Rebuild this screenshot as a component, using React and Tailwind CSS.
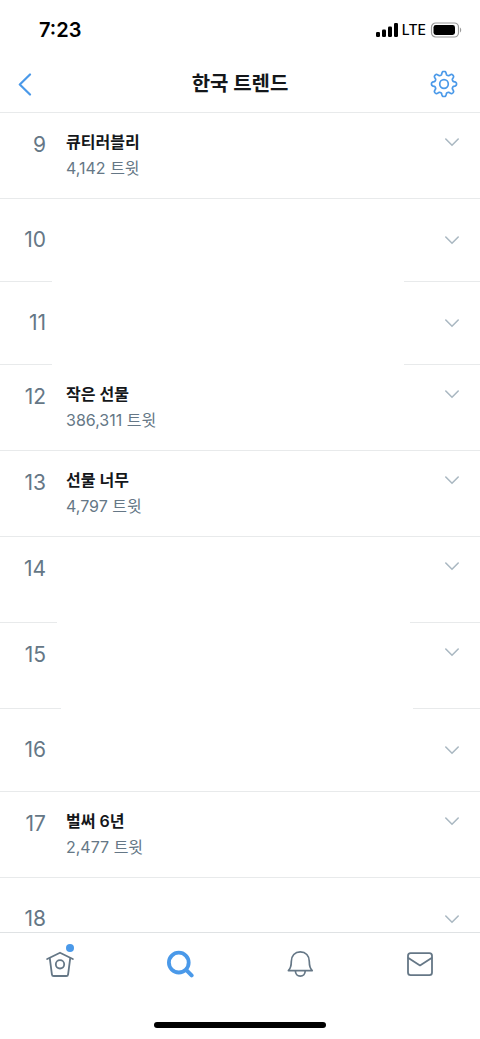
import React, { useState } from 'react';

const trends = [
    { rank: 9, title: '큐티러블리', count: '4,142' },
    { rank: 10, size: 'short', divider: 'narrow' },
    { rank: 11, size: 'short', divider: 'narrow' },
    { rank: 12, title: '작은 선물', count: '386,311' },
    { rank: 13, title: '선물 너무', count: '4,797' },
    { rank: 14, divider: 'medium' },
    { rank: 15, divider: 'wide' },
    { rank: 16, size: 'short' },
    { rank: 17, title: '벌써 6년', count: '2,477' },
    { rank: 18, size: 'short' },
];

// left and right pieces of a broken divider line
const dividers = {
    narrow: ['w-[52px]', 'w-[76px]'],
    medium: ['w-[57px]', 'w-[70px]'],
    wide: ['w-[61px]', 'w-[67px]'],
};

// outline of the settings gear, 8 teeth round a 28x28 box
const gearPoints = Array.from({ length: 160 }, (_, i) => {
    const a = (i / 160) * Math.PI * 2;
    const r = 10.9 + 1.7 * Math.tanh(1.8 * Math.cos(8 * a));
    return `${(14 + r * Math.cos(a)).toFixed(2)},${(14 + r * Math.sin(a)).toFixed(2)}`;
}).join(' ');

const GearIcon = () => (
    <svg width="28" height="28" viewBox="0 0 28 28" fill="none" stroke="currentColor" strokeWidth="1.7" strokeLinejoin="round">
        <polygon points={gearPoints} />
        <circle cx="14" cy="14" r="4.3" />
    </svg>
);

const HomeIcon = () => (
    <svg width="28" height="28" viewBox="0 0 28 28" fill="none" stroke="currentColor" strokeWidth="1.8" strokeLinecap="round" strokeLinejoin="round">
        <path d="M1.2 9 14 2.7 26.800 9" />
        <path d="M3.8 8.400l2.100 15.900c.1 1 .8 1.700 1.800 1.700h12.600c1 0 1.700-.7 1.800-1.700L24.200 8.400" />
        <circle cx="14" cy="14.3" r="4.2" />
    </svg>
);

const SearchIcon = () => (
    <svg width="28" height="28" viewBox="0 0 28 28" fill="none" stroke="currentColor" strokeLinecap="round">
        <circle cx="12.8" cy="12.6" r="9.9" strokeWidth="3.8" />
        <path d="M20.4 20.2l5.2 5.2" strokeWidth="4" />
    </svg>
);

const BellIcon = () => (
    <svg width="28" height="28" viewBox="0 0 28 28" fill="none" stroke="currentColor" strokeWidth="1.7" strokeLinecap="round" strokeLinejoin="round">
        <path d="M2.4 20.6c2-2.1 2.9-4.3 2.9-9.2C5.3 5.7 8.9 1.9 14.3 1.9s9 3.8 9 9.5c0 4.9.9 7.1 2.9 9.2z" />
        <path d="M9.4 20.8c0 3.1 2 5.4 4.9 5.4s4.9-2.3 4.9-5.4" />
    </svg>
);

const MailIcon = () => (
    <svg width="28" height="28" viewBox="0 0 28 28" fill="none" stroke="currentColor" strokeWidth="1.8" strokeLinecap="round" strokeLinejoin="round">
        <rect x="2" y="3.2" width="24" height="22" rx="2.6" />
        <path d="M2.4 8 14 15.4 25.6 8" />
    </svg>
);

const StatusBar = () => (
    <div className="flex h-14 shrink-0 items-center justify-between pt-1 pr-[18px] pl-[39px] text-black">
        <span className="text-xl font-semibold">7:23</span>
        <div className="flex items-center">
            <svg width="22" height="14" viewBox="0 0 22 14" fill="currentColor">
                <rect x="0" y="9" width="4" height="5" rx="1.2" />
                <rect x="6" y="6.5" width="4" height="7.5" rx="1.2" />
                <rect x="12" y="3.5" width="4" height="10.5" rx="1.2" />
                <rect x="18" y="0" width="4" height="14" rx="1.2" />
            </svg>
            <span className="ml-1 text-sm font-medium">LTE</span>
            <svg className="ml-1" width="32" height="16" viewBox="0 0 32 16" fill="none">
                <rect x="1.5" y="1" width="27" height="14" rx="4.2" stroke="#9a9a9a" strokeWidth="1.2" />
                <rect x="3.5" y="3" width="21.500" height="10" rx="2.4" fill="#000" />
                <path d="M30 5.5c1.600.8 1.600 4.200 0 5z" fill="#9a9a9a" />
            </svg>
        </div>
    </div>
);

const TrendRow = ({ trend }) => {
    const short = trend.size === 'short';
    const divider = dividers[trend.divider];
    return (
        <li className={`flex flex-col ${short ? 'h-[83px]' : 'h-[86px]'}`}>
            <div className={`flex flex-1 pr-5 ${short ? 'items-center' : 'items-start pt-4'}`}>
                <span className="w-[46px] text-right text-[21px] leading-8 text-[#657786]">{trend.rank}</span>
                <div className="ml-5 flex-1">
                    {trend.title && (
                        <>
                            <h2 className="text-base leading-[26px] font-semibold text-[#14171a]">{trend.title}</h2>
                            <p className="text-base leading-[26px] text-[#657786]">{trend.count} 트윗</p>
                        </>
                    )}
                </div>
                <button aria-label={`${trend.rank}위 더보기`} className="flex h-[26px] items-center text-[#aab8c2]">
                    <svg width="16" height="10" viewBox="0 0 16 10" fill="none" stroke="currentColor" strokeWidth="1.6" strokeLinecap="round">
                        <path d="M1.8 2 8 8.2 14.2 2" />
                    </svg>
                </button>
            </div>
            {divider ? (
                <div className="flex justify-between">
                    <span className={`h-px bg-[#e8eaeb] ${divider[0]}`} />
                    <span className={`h-px bg-[#e8eaeb] ${divider[1]}`} />
                </div>
            ) : (
                <div className="h-px bg-[#e8eaeb]" />
            )}
        </li>
    );
};

const tabs = [
    { id: 'home', label: '홈', Icon: HomeIcon, badge: true },
    { id: 'search', label: '검색', Icon: SearchIcon },
    { id: 'alerts', label: '알림', Icon: BellIcon },
    { id: 'messages', label: '쪽지', Icon: MailIcon },
];

const App = () => {
    const [active, setActive] = useState('search');

    return (
        <div className="flex h-dvh flex-col bg-white font-[Inter,'Noto_Sans_CJK_KR',sans-serif]">
            <StatusBar />

            <header className="grid h-[57px] shrink-0 grid-cols-[1fr_auto_1fr] items-center border-b border-[#e8eaeb] px-[18px]">
                <button aria-label="뒤로" className="justify-self-start text-[#4a99e9]">
                    <svg width="14" height="24" viewBox="0 0 14 24" fill="none" stroke="currentColor" strokeWidth="2.2" strokeLinecap="round" strokeLinejoin="round">
                        <path d="M12 2.5 1.8 12.5 12 22.5" />
                    </svg>
                </button>
                <h1 className="text-xl font-bold text-[#14171a]">한국 트렌드</h1>
                <button aria-label="설정" className="mr-1 justify-self-end text-[#4a99e9]">
                    <GearIcon />
                </button>
            </header>

            <main className="min-h-0 flex-1 overflow-y-auto [scrollbar-width:none]">
                <ul>
                    {trends.map((t) => <TrendRow key={t.rank} trend={t} />)}
                </ul>
            </main>

            <footer className="shrink-0 border-t border-[#dfe2e4] bg-white pb-[11px]">
                <nav className="flex h-[62px]">
                    {tabs.map(({ id, label, Icon, badge }) => (
                        <button key={id} aria-label={label} onClick={() => setActive(id)} className={`flex flex-1 items-center justify-center ${active === id ? 'text-[#4a99e9]' : 'text-[#657786]'}`}>
                            <span className="relative">
                                <Icon />
                                {badge && <span className="absolute -top-1.5 right-0 size-2 rounded-full bg-[#4a99e9]" />}
                            </span>
                        </button>
                    ))}
                </nav>
                <div className="mx-auto mt-[27px] h-1.5 w-[172px] rounded-full bg-black" />
            </footer>
        </div>
    );
};

export default App;
